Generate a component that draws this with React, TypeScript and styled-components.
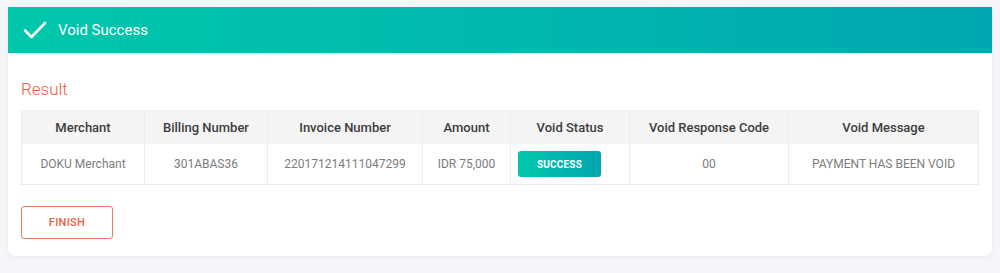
import styled, { createGlobalStyle } from 'styled-components';

const GlobalStyle = createGlobalStyle`
  html, body {
    margin: 0;
    padding: 0;
    background: #f5f6f9;
    font-family: Roboto, "Liberation Sans", sans-serif;
  }
`;

const columns = [
  { title: 'Merchant', width: 123 },
  { title: 'Billing Number', width: 123 },
  { title: 'Invoice Number', width: 155 },
  { title: 'Amount', width: 88 },
  { title: 'Void Status', width: 119 },
  { title: 'Void Response Code', width: 159 },
  { title: 'Void Message', width: 190 },
];

const CheckIcon = () => (
  <svg width="24" height="18" viewBox="0 0 24 18" fill="none">
    <path d="M2 9.5 L8.5 16 L22 2" stroke="#fff" strokeWidth="2.6" strokeLinecap="round" strokeLinejoin="round" />
  </svg>
);

export default function App() {
  return (
    <>
      <GlobalStyle />
      <Page>
        <Card>
          <Header>
            <CheckIcon />
            <span>Void Success</span>
          </Header>
          <Body>
            <SectionTitle>Result</SectionTitle>
            <Table>
              <colgroup>
                {columns.map((c) => (
                  <col key={c.title} style={{ width: c.width }} />
                ))}
              </colgroup>
              <thead>
                <tr>
                  {columns.map((c) => (
                    <Th key={c.title}>{c.title}</Th>
                  ))}
                </tr>
              </thead>
              <tbody>
                <tr>
                  <Td>DOKU Merchant</Td>
                  <Td>301ABAS36</Td>
                  <Td>220171214111047299</Td>
                  <Td>IDR 75,000</Td>
                  <Td>
                    <StatusBadge>SUCCESS</StatusBadge>
                  </Td>
                  <Td>00</Td>
                  <Td>PAYMENT HAS BEEN VOID</Td>
                </tr>
              </tbody>
            </Table>
            <FinishButton>FINISH</FinishButton>
          </Body>
        </Card>
      </Page>
    </>
  );
}

const Page = styled.div`
  padding: 7px 8px 17px 8px;
`;

const Card = styled.div`
  background: #fff;
  border-radius: 0 0 8px 8px;
  box-shadow: 0 1px 4px rgba(40, 50, 80, 0.06);
  overflow: hidden;
`;

const Header = styled.div`
  display: flex;
  align-items: center;
  gap: 11px;
  height: 46px;
  padding: 0 0 0 15px;
  background: linear-gradient(90deg, #00c7ac 0%, #00b9ae 50%, #00a6b0 100%);
  color: #fff;
  font-size: 15px;
  font-weight: 400;
  letter-spacing: 0;
`;

const Body = styled.div`
  padding: 26px 14px 17px 13px;
`;

const SectionTitle = styled.div`
  color: #e9623f;
  font-size: 17px;
  font-weight: 300;
  line-height: 20px;
  margin-bottom: 11px;
`;

const Table = styled.table`
  width: 957px;
  border-collapse: collapse;
  table-layout: fixed;
  border: 1px solid #ececec;
`;

const Th = styled.th`
  height: 33px;
  padding: 0;
  background: #f4f4f4;
  color: #3d3d3d;
  font-size: 13px;
  font-weight: 500;
  text-align: center;
  border-left: 1px solid #ececec;
`;

const Td = styled.td`
  height: 40px;
  padding: 0;
  color: #7d7d7d;
  font-size: 12px;
  font-weight: 400;
  text-align: center;
  border-left: 1px solid #ececec;
`;

const StatusBadge = styled.div`
  display: flex;
  align-items: center;
  justify-content: center;
  width: 83px;
  height: 26px;
  margin-left: 7px;
  border-radius: 3px;
  background: linear-gradient(90deg, #00c8ab 0%, #00a6b0 100%);
  color: #fff;
  font-size: 10px;
  font-weight: 700;
  letter-spacing: 0.2px;
`;

const FinishButton = styled.button`
  display: block;
  width: 92px;
  height: 33px;
  margin-top: 21px;
  background: #fff;
  border: 1px solid #ef7b5b;
  border-radius: 3px;
  color: #e9623f;
  font-family: Roboto, "Liberation Sans", sans-serif;
  font-size: 11px;
  font-weight: 500;
  letter-spacing: 0.3px;
  cursor: pointer;
`;
